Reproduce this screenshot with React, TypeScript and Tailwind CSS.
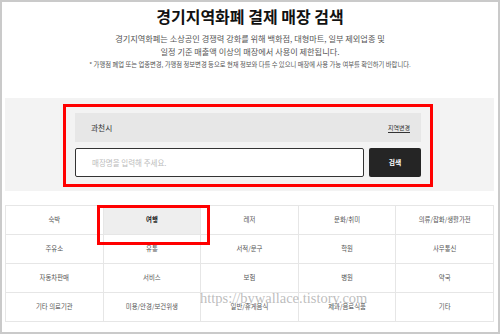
import React from 'react';

const categories = [
  '숙박', '여행', '레저', '문화/취미', '의류/잡화/생활가전',
  '주유소', '유통', '서적/문구', '학원', '사무통신',
  '자동차판매', '서비스', '보험', '병원', '약국',
  '기타 의료기관', '미용/안경/보건위생', '일반/휴게음식', '제과/음료식품', '기타',
];

export default function App() {
  return (
    <div
      className="relative w-[500px] h-[334px] overflow-hidden border-2 border-[#cacaca] bg-white text-[#333]"
      style={{ fontFamily: '"Noto Sans CJK KR", "Noto Sans", sans-serif' }}
    >
      <h1 className="pt-[4px] text-center text-[16px] leading-[20px] font-bold text-[#111]">
        경기지역화폐 결제 매장 검색
      </h1>
      <p className="mt-[6px] text-center text-[8.2px] leading-[13px] text-[#555]">
        경기지역화폐는 소상공인 경쟁력 강화를 위해 백화점, 대형마트, 일부 제외업종 및
        <br />
        일정 기준 매출액 이상의 매장에서 사용이 제한됩니다.
      </p>
      <p className="mt-[2px] text-center text-[6.3px] leading-[10px] text-[#555]">
        * 가맹점 폐업 또는 업종변경, 가맹점 정보변경 등으로 현재 정보와 다를 수 있으니 매장에 사용 가능 여부를 확인하기 바랍니다.
      </p>

      <div className="mt-[28px] ml-[3px] mr-[4px] h-[93px] bg-[#f3f3f3] pt-[6px]">
        <div className="ml-[58px] w-[370px] h-[83px] border-[3px] border-[#ff0000] px-[9px] pt-[6px]">
          <div className="flex h-[29px] items-center justify-between bg-[#e7e7e7] pl-[16px] pr-[11px]">
            <span className="text-[7.7px] text-[#333]">과천시</span>
            <span className="border-b border-[#333] text-[6px] leading-[9px] text-[#333]">지역변경</span>
          </div>
          <div className="mt-[6px] flex h-[29px] gap-[5px]">
            <div className="flex flex-1 items-center rounded-[2px] border border-[#333] bg-white pl-[16px]">
              <span className="text-[7.5px] text-[#bbb]">매장명을 입력해 주세요.</span>
            </div>
            <div className="flex w-[52px] items-center justify-center rounded-[2px] bg-[#252525]">
              <span className="text-[6.8px] font-bold text-white">검색</span>
            </div>
          </div>
        </div>
      </div>

      <div className="mt-[14px] ml-[3px] w-[489px] grid grid-cols-5 border-t border-l border-[#e6e6e6]">
        {categories.map((c) => (
          <div
            key={c}
            className={`flex h-[29px] items-center justify-center border-r border-b border-[#e6e6e6] text-[6.4px] ${
              c === '여행' ? 'bg-[#eeeeee] font-bold text-[#222]' : 'text-[#555]'
            }`}
          >
            {c}
          </div>
        ))}
      </div>

      <div className="absolute left-[95px] top-[203px] w-[113px] h-[40px] border-[3px] border-[#ff0000]" />

      <div
        className="pointer-events-none absolute left-[198px] top-[287px] text-[14.5px] leading-[18px] text-[#a0a0a0]/70"
        style={{ fontFamily: '"Liberation Serif", "DejaVu Serif", serif' }}
      >
        https://bywallace.tistory.com
      </div>
    </div>
  );
}
